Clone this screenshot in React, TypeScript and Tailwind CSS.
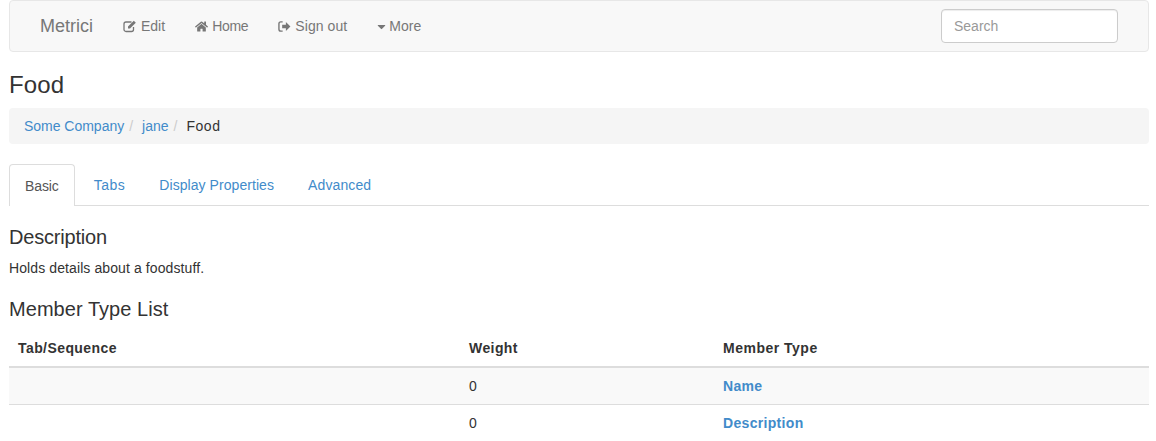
import { FaHome, FaCaretDown } from 'react-icons/fa';

function EditIcon() {
  return (
    <svg viewBox="0 0 14 14" className="w-[14px] h-[14px] mr-[4px]" fill="none">
      <path d="M10.5 8v2.5a2 2 0 0 1-2 2H3a2 2 0 0 1-2-2V5a2 2 0 0 1 2-2h5.5" stroke="currentColor" strokeWidth="1.3" />
      <path d="M5 7.5 10.8 1.7l2 2L7 9.5H5z" fill="currentColor" />
    </svg>
  );
}

function SignOutIcon() {
  return (
    <svg viewBox="0 0 14 14" className="w-[13px] h-[13px] ml-[1px] mr-[4px]" fill="none">
      <path d="M5 2H3a2 2 0 0 0-2 2v6a2 2 0 0 0 2 2h2" stroke="currentColor" strokeWidth="1.5" />
      <path d="M4.5 5h4V2.2L13.4 7l-4.9 4.8V9h-4z" fill="currentColor" />
    </svg>
  );
}

const rows = [
  { weight: '0', type: 'Name' },
  { weight: '0', type: 'Description' },
];

export default function App() {
  return (
    <div className="h-[441px] overflow-hidden bg-white pl-[9px] pr-[7px] font-['Liberation_Sans',Arial,sans-serif] text-[14px] leading-[20px] text-[#333]">
      {/* Navbar */}
      <nav className="flex h-[52px] items-center rounded-[4px] border border-[#e7e7e7] bg-[#f8f8f8] pl-[15px] pr-[30px] text-[#777]">
        <a className="px-[15px] text-[18px]">Metrici</a>
        <a className="flex items-center px-[15px]"><EditIcon />Edit</a>
        <a className="flex items-center pl-[15px] pr-[14px]"><FaHome className="mr-[4px] text-[13px]" /><span className="tracking-[-0.3px]">Home</span></a>
        <a className="flex items-center px-[15px]"><SignOutIcon /><span className="tracking-[0.08px]">Sign out</span></a>
        <a className="flex items-center pl-[13px] pr-[15px]"><FaCaretDown className="mr-[1px] text-[13px]" />More</a>
        <input
          placeholder="Search"
          className="ml-auto h-[34px] w-[177px] rounded-[4px] border border-[#ccc] bg-white px-[12px] text-[14px] shadow-[inset_0_1px_1px_rgba(0,0,0,0.075)] placeholder:text-[#999]"
        />
      </nav>

      <h3 className="mt-[20px] mb-[10px] text-[24px] leading-[26px] font-medium tracking-[0.1px]">Food</h3>

      {/* Breadcrumb */}
      <ol className="mb-[20px] flex rounded-[4px] bg-[#f5f5f5] px-[15px] py-[8px]">
        <li><a className="text-[#428bca] tracking-[-0.02px]">Some Company</a><span className="px-[5px] text-[#ccc]">/</span></li>
        <li className="ml-[4px]"><a className="text-[#428bca]">jane</a><span className="px-[5px] text-[#ccc]">/</span></li>
        <li className="ml-[4px] tracking-[0.55px]">Food</li>
      </ol>

      {/* Tabs */}
      <ul className="flex h-[42px] border-b border-[#ddd]">
        <li className="h-[42px] rounded-t-[4px] border border-b-0 border-[#ddd] bg-white px-[15px] pt-[11px] text-[#555] tracking-[-0.1px]">Basic</li>
        <li className="ml-[3px] px-[16px] pt-[11px] text-[#428bca] tracking-[0.5px]">Tabs</li>
        <li className="ml-[2px] px-[16px] pt-[11px] text-[#428bca] tracking-[0.06px]">Display Properties</li>
        <li className="ml-[2px] px-[16px] pt-[11px] text-[#428bca] tracking-[0.12px]">Advanced</li>
      </ul>

      <h4 className="mt-[21px] mb-[11px] text-[20px] leading-[20px] font-medium tracking-[-0.2px]">Description</h4>
      <p className="mb-[10px] tracking-[0.1px]">Holds details about a foodstuff.</p>

      <h4 className="mt-[21px] mb-[11px] text-[20px] leading-[20px] font-medium tracking-[0.05px]">Member Type List</h4>
      <table className="w-full table-fixed border-collapse">
        <thead>
          <tr className="border-b-2 border-[#ddd] text-left">
            <th className="w-[451px] py-[8px] pl-[9px] pr-[8px] font-bold tracking-[0.42px]">Tab/Sequence</th>
            <th className="w-[254px] py-[8px] pl-[9px] pr-[8px] font-bold tracking-[0.42px]">Weight</th>
            <th className="py-[8px] pl-[9px] pr-[8px] font-bold tracking-[0.5px]">Member Type</th>
          </tr>
        </thead>
        <tbody>
          {rows.map((row, i) => (
            <tr key={row.type} className={i % 2 === 0 ? 'border-b border-[#ddd] bg-[#f9f9f9]' : ''}>
              <td className="p-[8px]"></td>
              <td className="py-[8px] pl-[9px] pr-[8px]">{row.weight}</td>
              <td className="py-[8px] pl-[9px] pr-[8px] font-bold text-[#428bca] tracking-[0.32px]">{row.type}</td>
            </tr>
          ))}
        </tbody>
      </table>
    </div>
  );
}
